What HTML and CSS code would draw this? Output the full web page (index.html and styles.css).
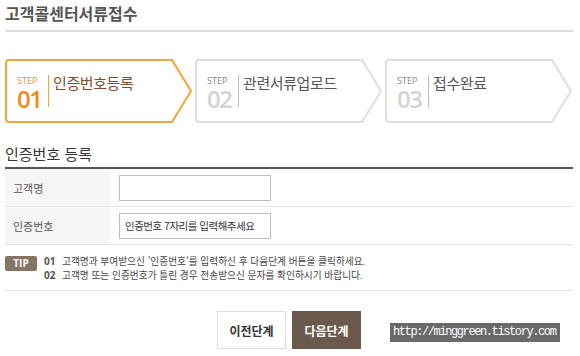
FILE: index.html
```html
<!DOCTYPE html>
<html lang="ko">
<head>
    <meta charset="UTF-8">
    <meta name="viewport" content="width=device-width, initial-scale=1.0">
    <title>고객콜센터서류접수</title>
    <link rel="stylesheet" href="styles.css">
</head>
<body>
    <div class="page">
        <h1 class="page-title">고객콜센터서류접수</h1>

        <ol class="steps">
            <li class="step active">
                <svg class="step-bg" width="188" height="64" viewBox="0 0 188 64">
                    <path d="M4 1 H167 L186 32 L167 63 H4 Q1 63 1 60 V4 Q1 1 4 1 Z"/>
                </svg>
                <div class="step-num">
                    <span class="step-tag">STEP</span>
                    <span class="step-no">01</span>
                </div>
                <span class="step-name">인증번호등록</span>
            </li>
            <li class="step">
                <svg class="step-bg" width="188" height="64" viewBox="0 0 188 64">
                    <path d="M4 1 H167 L186 32 L167 63 H4 Q1 63 1 60 V4 Q1 1 4 1 Z"/>
                </svg>
                <div class="step-num">
                    <span class="step-tag">STEP</span>
                    <span class="step-no">02</span>
                </div>
                <span class="step-name">관련서류업로드</span>
            </li>
            <li class="step">
                <svg class="step-bg" width="188" height="64" viewBox="0 0 188 64">
                    <path d="M4 1 H167 L186 32 L167 63 H4 Q1 63 1 60 V4 Q1 1 4 1 Z"/>
                </svg>
                <div class="step-num">
                    <span class="step-tag">STEP</span>
                    <span class="step-no">03</span>
                </div>
                <span class="step-name">접수완료</span>
            </li>
        </ol>

        <h2 class="sub-title">인증번호 등록</h2>

        <div class="form-table">
            <div class="form-row">
                <label class="form-label" for="name">고객명</label>
                <div class="form-field">
                    <input type="text" id="name">
                </div>
            </div>
            <div class="form-row">
                <label class="form-label" for="code">인증번호</label>
                <div class="form-field">
                    <input type="text" id="code" value="인증번호 7자리를 입력해주세요">
                </div>
            </div>
        </div>

        <div class="tip">
            <span class="tip-badge">TIP</span>
            <ul class="tip-list">
                <li><b>01</b>고객명과 부여받으신 '인증번호'를 입력하신 후 다음단계 버튼을 클릭하세요.</li>
                <li><b>02</b>고객명 또는 인증번호가 틀린 경우 전송받으신 문자를 확인하시기 바랍니다.</li>
            </ul>
        </div>

        <div class="buttons">
            <button class="btn btn-prev">이전단계</button>
            <button class="btn btn-next">다음단계</button>
        </div>

        <span class="watermark">http://minggreen.tistory.com</span>
    </div>
</body>
</html>
```
FILE: styles.css
```css
body {
    margin: 0;
    background: #fff;
    font-family: "Noto Sans CJK KR", "Noto Sans", sans-serif;
    color: #333;
}
.page {
    position: relative;
    width: 568px;
    padding: 0 7px 0 5px;
}
.page-title {
    margin: 0;
    height: 30px;
    font-size: 16px;
    line-height: 26px;
    font-weight: bold;
    color: #555;
    border-bottom: 2px solid #dcdcdc;
}

/* 단계 표시 */
.steps {
    display: flex;
    gap: 2px;
    list-style: none;
    margin: 27px 0 0;
    padding: 0;
}
.step {
    position: relative;
    display: flex;
    align-items: flex-start;
    width: 188px;
    height: 64px;
    box-sizing: border-box;
    padding: 14px 0 0 12px;
}
.step-bg {
    position: absolute;
    left: 0;
    top: 0;
}
.step-bg path {
    fill: #fff;
    stroke: #dedede;
    stroke-width: 2;
}
.step.active .step-bg path {
    stroke: #eea53a;
}
.step-num {
    position: relative;
    display: flex;
    flex-direction: column;
    width: 31px;
    height: 32px;
    border-right: 1px solid #bbb;
    margin-top: 2px;
}
.step-tag {
    font-family: "Open Sans", sans-serif;
    font-size: 9px;
    line-height: 12px;
    color: #888;
}
.step-no {
    font-family: "Open Sans", sans-serif;
    font-size: 24px;
    font-weight: 600;
    line-height: 24px;
    letter-spacing: -1.5px;
    color: #d4d4d4;
}
.step-name {
    position: relative;
    margin-left: 4px;
    font-size: 15px;
    line-height: 20px;
    letter-spacing: -0.4px;
    color: #555;
}
.step.active .step-num {
    border-right-color: #eea53a;
}
.step.active .step-tag,
.step.active .step-no {
    color: #f08a1c;
}
.step.active .step-name {
    color: #86492a;
}

/* 입력 폼 */
.sub-title {
    margin: 20px 0 0;
    font-size: 15px;
    line-height: 22px;
    font-weight: normal;
    color: #333;
    padding-bottom: 2px;
    border-bottom: 2px solid #555;
}
.form-row {
    display: grid;
    grid-template-columns: 105px 1fr;
    height: 37px;
    border-bottom: 1px solid #e6e6e6;
}
.form-label {
    display: flex;
    align-items: center;
    padding-left: 8px;
    background: #f6f6f6;
    font-size: 11px;
    color: #555;
}
.form-field {
    display: flex;
    align-items: center;
    padding-left: 9px;
}
.form-field input {
    width: 152px;
    height: 26px;
    box-sizing: border-box;
    border: 1px solid #bdbdbd;
    padding: 0 5px;
    font-family: "Noto Sans CJK KR", sans-serif;
    font-size: 10.5px;
    letter-spacing: -0.5px;
    color: #333;
}

/* 안내 */
.tip {
    display: flex;
    align-items: flex-start;
    margin-top: 9px;
    padding-bottom: 8px;
    border-bottom: 1px solid #e3e3e3;
}
.tip-badge {
    width: 32px;
    height: 15px;
    border-radius: 2px;
    background: #857565;
    color: #fff;
    font-family: "Open Sans", sans-serif;
    font-size: 10px;
    font-weight: bold;
    line-height: 15px;
    text-align: center;
    margin-top: 2px;
}
.tip-list {
    list-style: none;
    margin: 0 0 0 7px;
    padding: 0;
    font-size: 9.7px;
    line-height: 14px;
    color: #444;
}
.tip-list b {
    display: inline-block;
    width: 18px;
    font-family: "Open Sans", sans-serif;
    font-size: 10px;
    color: #555;
}

/* 버튼 */
.buttons {
    display: flex;
    justify-content: center;
    gap: 6px;
    margin-top: 20px;
}
.btn {
    width: 69px;
    height: 38px;
    border: 1px solid #dddddd;
    background: #fff;
    font-family: "Noto Sans CJK KR", sans-serif;
    font-size: 12px;
    font-weight: bold;
    color: #333;
    padding: 0;
}
.btn-next {
    background: #6b5a4b;
    border-color: #6b5a4b;
    color: #fff;
}
.watermark {
    position: absolute;
    left: 390px;
    top: 323px;
    width: 164px;
    padding: 1px 3px;
    background: #6a6a6a;
    color: #fff;
    font-family: "Liberation Mono", monospace;
    font-size: 12px;
    line-height: 17px;
    letter-spacing: -1.4px;
}
```
